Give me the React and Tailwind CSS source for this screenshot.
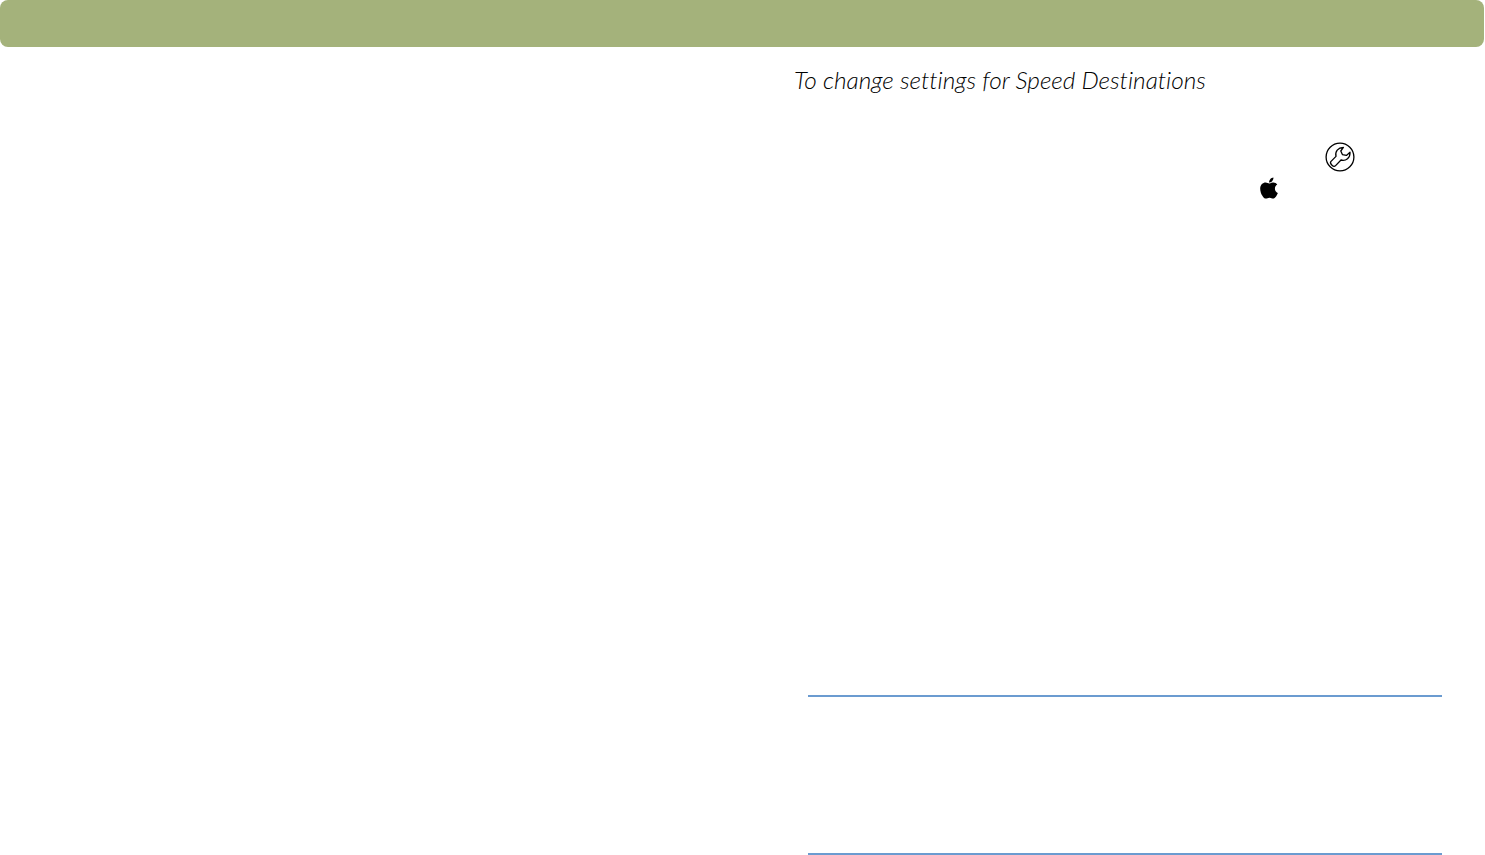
import { FaApple } from "react-icons/fa";

const WrenchIcon = () => (
  <svg width="30" height="30" viewBox="0 0 30 30" fill="none" stroke="#000" strokeWidth="1.3" strokeLinejoin="round">
    <circle cx="15" cy="15" r="13.9" />
    <path d="M5.8 19.6 L11 14.4 C9.8 9.6 13 5.6 18.4 5.4 L15.8 9 L17.4 12.6 L21.4 13.4 L25 10.2 C25.4 15.6 21 19.4 16 18 L10.6 23.6 C9.6 24.6 8.2 24.4 7 23.2 C5.6 21.8 5 20.6 5.8 19.6 Z" />
  </svg>
);

const App = () => {
  return (
    <div className="h-[855px] w-full overflow-hidden bg-white font-['Lato',sans-serif] text-black">
      <div className="mr-px h-[47px] rounded-lg bg-[#a4b27b]" />

      <div className="ml-[794px] mr-[43px]">
        <h2 className="mt-[17px] h-[32px] text-[24.4px] leading-[32px] font-light italic [font-variant-ligatures:none]">
          To change settings for Speed Destinations
        </h2>

        <div className="mt-[46px] flex justify-end pr-[87px]">
          <WrenchIcon />
        </div>

        <div className="mt-[4px] flex justify-end pr-[161px]">
          <FaApple size={24} />
        </div>

        <div className="ml-[14px] mt-[495px] h-[2px] bg-[#6b9bd0]" />
        <div className="ml-[14px] mt-[156px] h-[2px] bg-[#6b9bd0]" />
      </div>
    </div>
  );
};

export default App;
